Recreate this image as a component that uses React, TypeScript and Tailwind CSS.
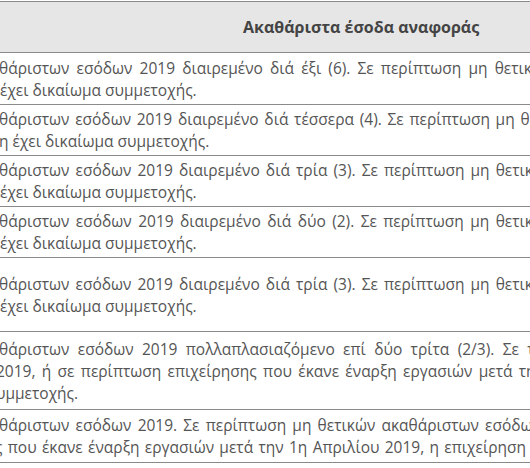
import React from 'react'

// cls: offset of the cut-off line, and for justified lines the width the line is spread over
type Line = { text: string; cls: string }
type Row = { h: string; lines: Line[] }

const J = 'text-justify [text-align-last:justify]'
const N = 'whitespace-nowrap'

const ROWS: Row[] = [
  {
    h: 'h-[52px]',
    lines: [
      { text: 'θάριστων εσόδων 2019 διαιρεμένο διά έξι (6). Σε περίπτωση μη θετικ', cls: `${J} -ml-px w-[533px]` },
      { text: 'έχει δικαίωμα συμμετοχής.', cls: `${N} ml-0` },
    ],
  },
  {
    h: 'h-[51px]',
    lines: [
      { text: 'θάριστων εσόδων 2019 διαιρεμένο διά τέσσερα (4). Σε περίπτωση μη θε', cls: `${J} -ml-px w-[538px]` },
      { text: 'η έχει δικαίωμα συμμετοχής.', cls: `${N} -ml-px` },
    ],
  },
  {
    h: 'h-[51px]',
    lines: [
      { text: 'θάριστων εσόδων 2019 διαιρεμένο διά τρία (3). Σε περίπτωση μη θετικ', cls: `${J} -ml-px w-[534px]` },
      { text: 'έχει δικαίωμα συμμετοχής.', cls: `${N} ml-0` },
    ],
  },
  {
    h: 'h-[51px]',
    lines: [
      { text: 'θάριστων εσόδων 2019 διαιρεμένο διά δύο (2). Σε περίπτωση μη θετικ', cls: `${J} -ml-px w-[534px]` },
      { text: 'έχει δικαίωμα συμμετοχής.', cls: `${N} ml-0` },
    ],
  },
  {
    h: 'h-[74px]',
    lines: [
      { text: 'θάριστων εσόδων 2019 διαιρεμένο διά τρία (3). Σε περίπτωση μη θετικ', cls: `${J} -ml-px w-[534px]` },
      { text: 'έχει δικαίωμα συμμετοχής.', cls: `${N} ml-0` },
    ],
  },
  {
    h: 'h-[78px]',
    lines: [
      { text: 'θάριστων εσόδων 2019 πολλαπλασιαζόμενο επί δύο τρίτα (2/3). Σε τη', cls: `${J} -ml-px w-[545px]` },
      { text: '2019, ή σε περίπτωση επιχείρησης που έκανε έναρξη εργασιών μετά την', cls: `${J} -ml-1 w-[548px]` },
      { text: 'υμμετοχής.', cls: `${N} -ml-1` },
    ],
  },
  {
    h: 'h-[53px]',
    lines: [
      { text: 'θάριστων εσόδων 2019. Σε περίπτωση μη θετικών ακαθάριστων εσόδων', cls: `${J} -ml-px w-[542px]` },
      { text: 'ς που έκανε έναρξη εργασιών μετά την 1η Απριλίου 2019, η επιχείρηση', cls: `${J} -ml-[5px] w-[531px]` },
    ],
  },
]

export default function App() {
  return (
    <div className="w-[530px] h-[468px] overflow-hidden bg-white pt-px font-['Open_Sans',sans-serif] text-[15.5px] leading-[22px] text-[#555]">
      <div className="h-[52px] bg-[#e6e6e6] border-y border-[#8a8a8a] flex items-center pl-[243px]">
        <span className="font-bold text-[16px] text-[#444] whitespace-nowrap">Ακαθάριστα έσοδα αναφοράς</span>
      </div>
      {ROWS.map((row, i) => (
        <div key={i} className={`${row.h} border-b border-[#8a8a8a] overflow-hidden flex flex-col justify-center`}>
          {row.lines.map((l, j) => (
            <div key={j} className={`${l.cls} shrink-0`}>
              {l.text}
            </div>
          ))}
        </div>
      ))}
    </div>
  )
}
